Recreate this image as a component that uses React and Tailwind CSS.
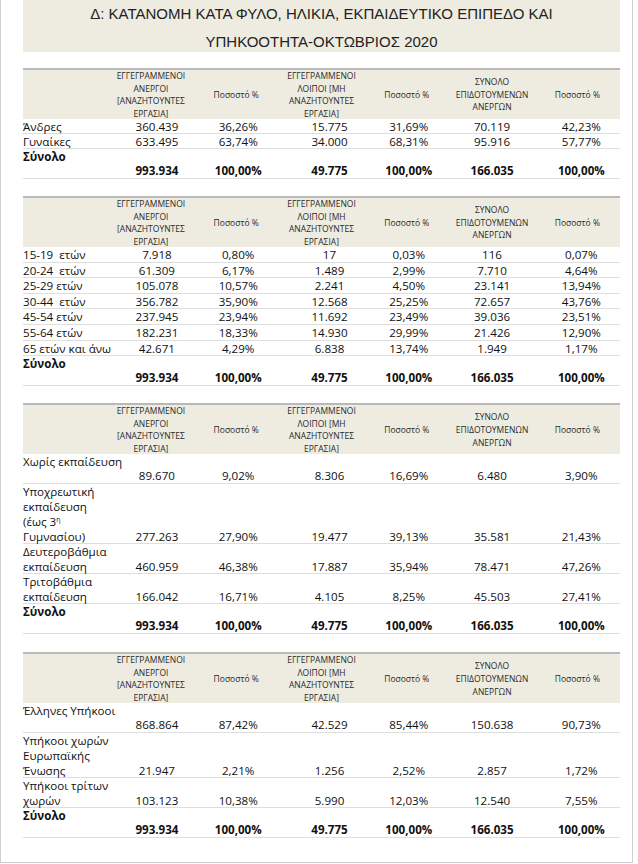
import React from "react";

const PAD = ["pl-[12px]", "pl-[4px]", "pl-[16px]", "pl-[4px]", "pl-0", "pl-[8px]"];

function HeaderCell({ children }) {
  return (
    <div className="flex items-center justify-center text-center">
      <div>{children}</div>
    </div>
  );
}

function Header() {
  return (
    <div className="grid grid-cols-7 h-[51px] border-t-2 border-[#b9b9b9] bg-[#eeece1] text-[8.5px] leading-[12.6px] text-[#2a2a2a]">
      <div />
      <HeaderCell>
        ΕΓΓΕΓΡΑΜΜΕΝΟΙ
        <br />
        ΑΝΕΡΓΟΙ
        <br />
        [ΑΝΑΖΗΤΟΥΝΤΕΣ
        <br />
        ΕΡΓΑΣΙΑ]
      </HeaderCell>
      <HeaderCell>Ποσοστό %</HeaderCell>
      <HeaderCell>
        ΕΓΓΕΓΡΑΜΜΕΝΟΙ
        <br />
        ΛΟΙΠΟΙ [ΜΗ
        <br />
        ΑΝΑΖΗΤΟΥΝΤΕΣ
        <br />
        ΕΡΓΑΣΙΑ]
      </HeaderCell>
      <HeaderCell>Ποσοστό %</HeaderCell>
      <HeaderCell>
        ΣΥΝΟΛΟ
        <br />
        ΕΠΙΔΟΤΟΥΜΕΝΩΝ
        <br />
        ΑΝΕΡΓΩΝ
      </HeaderCell>
      <HeaderCell>Ποσοστό %</HeaderCell>
    </div>
  );
}

function Row({ label, vals, h, multi, bold }) {
  return (
    <div
      className={
        "grid grid-cols-7 border-b border-[#dedede] text-[11.6px] leading-[15px] text-[#111] " +
        h +
        (multi ? " items-end" : " items-center")
      }
    >
      <div
        className={
          "whitespace-pre text-left" +
          (bold ? " font-bold" : "") +
          (multi ? " self-start" : " self-center")
        }
      >
        {label}
      </div>
      {vals.map((v, i) => (
        <div key={i} className={"text-center " + PAD[i] + (bold ? " font-bold" : "")}>
          {v}
        </div>
      ))}
    </div>
  );
}

function Total({ vals }) {
  return <Row label="Σύνολο" vals={vals} h="h-[30px]" multi bold />;
}

const TOT = ["993.934", "100,00%", "49.775", "100,00%", "166.035", "100,00%"];

export default function App() {
  return (
    <div className="bg-white w-[638px] min-h-[864px] font-['Open_Sans',sans-serif]">
      <div className="w-[633px] h-[863px] border-x border-b border-[#cfcfcf] pl-[22px] pr-[12px]">
        <div className="h-[52px] bg-[#eeece1] text-center text-[15px] leading-[28px] text-[#222] font-['Liberation_Sans',Arial,sans-serif]">
          Δ: ΚΑΤΑΝΟΜΗ ΚΑΤΑ ΦΥΛΟ, ΗΛΙΚΙΑ, ΕΚΠΑΙΔΕΥΤΙΚΟ ΕΠΙΠΕΔΟ ΚΑΙ
          <br />
          ΥΠΗΚΟΟΤΗΤΑ-ΟΚΤΩΒΡΙΟΣ 2020
        </div>

        {/* Table 1 */}
        <div className="mt-[16px]">
          <Header />
          <Row label="Άνδρες" h="h-[15px]" vals={["360.439", "36,26%", "15.775", "31,69%", "70.119", "42,23%"]} />
          <Row label="Γυναίκες" h="h-[15px]" vals={["633.495", "63,74%", "34.000", "68,31%", "95.916", "57,77%"]} />
          <Total vals={TOT} />
        </div>

        {/* Table 2 */}
        <div className="mt-[17px]">
          <Header />
          <Row label="15-19  ετών" h="h-[15.6px]" vals={["7.918", "0,80%", "17", "0,03%", "116", "0,07%"]} />
          <Row label="20-24  ετών" h="h-[15.6px]" vals={["61.309", "6,17%", "1.489", "2,99%", "7.710", "4,64%"]} />
          <Row label="25-29 ετών" h="h-[15.6px]" vals={["105.078", "10,57%", "2.241", "4,50%", "23.141", "13,94%"]} />
          <Row label="30-44  ετών" h="h-[15.6px]" vals={["356.782", "35,90%", "12.568", "25,25%", "72.657", "43,76%"]} />
          <Row label="45-54 ετών" h="h-[15.6px]" vals={["237.945", "23,94%", "11.692", "23,49%", "39.036", "23,51%"]} />
          <Row label="55-64 ετών" h="h-[15.6px]" vals={["182.231", "18,33%", "14.930", "29,99%", "21.426", "12,90%"]} />
          <Row label="65 ετών και άνω" h="h-[15.6px]" vals={["42.671", "4,29%", "6.838", "13,74%", "1.949", "1,17%"]} />
          <Total vals={TOT} />
        </div>

        {/* Table 3 */}
        <div className="mt-[17px]">
          <Header />
          <Row label="Χωρίς εκπαίδευση" h="h-[30px]" multi vals={["89.670", "9,02%", "8.306", "16,69%", "6.480", "3,90%"]} />
          <Row
            label={
              <>
                Υποχρεωτική
                <br />
                εκπαίδευση
                <br />
                (έως 3<span className="relative -top-[4px] text-[7px] leading-none">η</span>
                <br />
                Γυμνασίου)
              </>
            }
            h="h-[60px]"
            multi
            vals={["277.263", "27,90%", "19.477", "39,13%", "35.581", "21,43%"]}
          />
          <Row
            label={
              <>
                Δευτεροβάθμια
                <br />
                εκπαίδευση
              </>
            }
            h="h-[30px]"
            multi
            vals={["460.959", "46,38%", "17.887", "35,94%", "78.471", "47,26%"]}
          />
          <Row
            label={
              <>
                Τριτοβάθμια
                <br />
                εκπαίδευση
              </>
            }
            h="h-[30px]"
            multi
            vals={["166.042", "16,71%", "4.105", "8,25%", "45.503", "27,41%"]}
          />
          <Total vals={TOT} />
        </div>

        {/* Table 4 */}
        <div className="mt-[18px]">
          <Header />
          <Row label="Έλληνες Υπήκοοι" h="h-[30px]" multi vals={["868.864", "87,42%", "42.529", "85,44%", "150.638", "90,73%"]} />
          <Row
            label={
              <>
                Υπήκοοι χωρών
                <br />
                Ευρωπαϊκής
                <br />
                Ένωσης
              </>
            }
            h="h-[45px]"
            multi
            vals={["21.947", "2,21%", "1.256", "2,52%", "2.857", "1,72%"]}
          />
          <Row
            label={
              <>
                Υπήκοοι τρίτων
                <br />
                χωρών
              </>
            }
            h="h-[30px]"
            multi
            vals={["103.123", "10,38%", "5.990", "12,03%", "12.540", "7,55%"]}
          />
          <Total vals={TOT} />
        </div>
      </div>
    </div>
  );
}
